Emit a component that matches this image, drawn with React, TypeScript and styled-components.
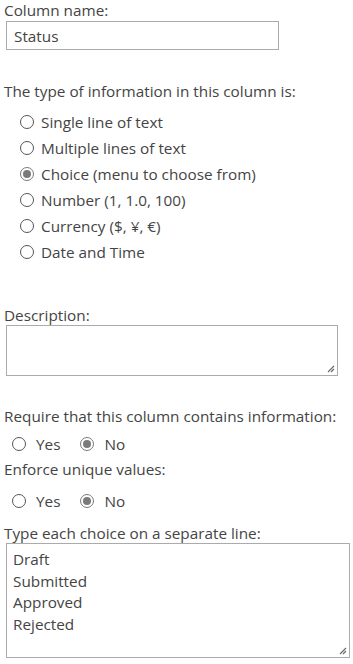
import React, { ReactElement } from 'react'
import styled, { createGlobalStyle } from 'styled-components'

const GlobalStyle = createGlobalStyle`
  body {
    margin: 0;
    background: #ffffff;
    font-family: 'Open Sans', 'Noto Sans', sans-serif;
    color: #444444;
  }
`

const Page = styled.div`
  width: 353px;
  height: 664px;
  overflow: hidden;
  padding-left: 4px;
  box-sizing: border-box;
`

const Label = styled.div<{ $top?: number }>`
  font-size: 15.3px;
  line-height: 20px;
  height: 20px;
  margin-top: ${(p) => p.$top ?? 0}px;
  white-space: nowrap;
`

const TextBox = styled.div`
  margin: 1px 0 0 2px;
  width: 273px;
  height: 29px;
  box-sizing: border-box;
  border: 1px solid #ababab;
  font-size: 15.3px;
  line-height: 28px;
  padding-left: 7px;
`

const Area = styled.div<{ $w: number; $h: number }>`
  position: relative;
  margin-left: 2px;
  width: ${(p) => p.$w}px;
  height: ${(p) => p.$h}px;
  box-sizing: border-box;
  border: 1px solid #ababab;
  font-size: 15.3px;
  line-height: 21.5px;
  padding: 5px 0 0 6px;
`

const Grip = styled.svg`
  position: absolute;
  right: 2px;
  bottom: 2px;
`

const RadioList = styled.div`
  margin-top: 8px;
  padding-left: 16px;
  display: flex;
  flex-direction: column;
`

const InlineRadios = styled.div<{ $top: number }>`
  display: flex;
  margin-top: ${(p) => p.$top}px;
  padding-left: 8px;
  gap: 20px;
`

const Option = styled.div<{ $gap: number }>`
  display: flex;
  align-items: center;
  height: 26px;
  gap: ${(p) => p.$gap}px;
  font-size: 15.3px;
  white-space: nowrap;
`

const Circle = styled.span<{ $on?: boolean }>`
  width: 14px;
  height: 14px;
  box-sizing: border-box;
  border-radius: 50%;
  border: 1px solid ${(p) => (p.$on ? '#7a7a7a' : '#555555')};
  display: flex;
  align-items: center;
  justify-content: center;
  &::after {
    content: '';
    display: ${(p) => (p.$on ? 'block' : 'none')};
    width: 8px;
    height: 8px;
    border-radius: 50%;
    background: #7a7a7a;
  }
`

const ResizeGrip = (): ReactElement => (
  <Grip width="8" height="8" viewBox="0 0 8 8">
    <path d="M7 1 L1 7 M7 4 L4 7" stroke="#6b6b6b" strokeWidth="1.2" />
  </Grip>
)

const types = [
  'Single line of text',
  'Multiple lines of text',
  'Choice (menu to choose from)',
  'Number (1, 1.0, 100)',
  'Currency ($, ¥, €)',
  'Date and Time',
]

const YesNo = ({ top }: { top: number }): ReactElement => (
  <InlineRadios $top={top}>
    <Option $gap={10}>
      <Circle />
      Yes
    </Option>
    <Option $gap={10}>
      <Circle $on />
      No
    </Option>
  </InlineRadios>
)

export default function App(): ReactElement {
  return (
    <Page>
      <GlobalStyle />
      <Label>Column name:</Label>
      <TextBox>Status</TextBox>
      <Label $top={31}>The type of information in this column is:</Label>
      <RadioList>
        {types.map((t, i) => (
          <Option key={t} $gap={7}>
            <Circle $on={i === 2} />
            {t}
          </Option>
        ))}
      </RadioList>
      <Label $top={40}>Description:</Label>
      <Area $w={332} $h={51}>
        <ResizeGrip />
      </Area>
      <Label $top={30}>Require that this column contains information:</Label>
      <YesNo top={5} />
      <Label $top={2}>Enforce unique values:</Label>
      <YesNo top={9} />
      <Label $top={9}>Type each choice on a separate line:</Label>
      <Area $w={344} $h={115}>
        Draft
        <br />
        Submitted
        <br />
        Approved
        <br />
        Rejected
        <ResizeGrip />
      </Area>
    </Page>
  )
}
